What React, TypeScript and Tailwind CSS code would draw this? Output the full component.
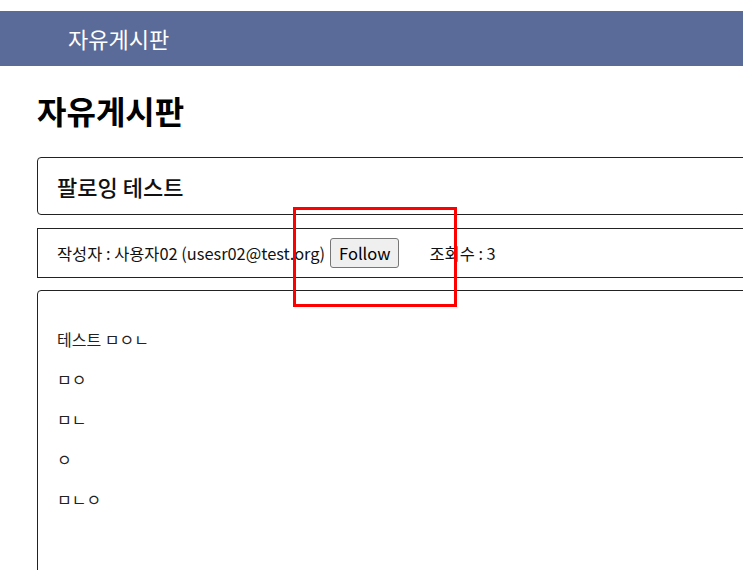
const FONT = "font-['Noto_Sans_CJK_KR','Noto_Sans',sans-serif]";

function Header() {
  return (
    <div className="mt-[11px] flex h-[55px] items-center bg-[#5a6b99] pl-[68px]">
      <span className="text-[22px] text-white">자유게시판</span>
    </div>
  );
}

function PostTitle() {
  return (
    <div className="flex h-[58px] w-[1100px] items-center rounded-[4px] border border-[#222] pl-[19px]">
      <h2 className="text-[22px] font-medium text-[#111]">팔로잉 테스트</h2>
    </div>
  );
}

function PostMeta() {
  return (
    <div className="mt-[13px] flex h-[50px] w-[1100px] items-center border border-[#222] pl-[19px] text-[16.4px] text-[#111]">
      <span>작성자 : 사용자02 (usesr02@test.org)</span>
      <button className="ml-[5px] h-[30px] rounded-[3px] border border-[#767676] bg-[#efefef] px-[8px] text-[16.5px] text-black">
        Follow
      </button>
      <span className="ml-[30px]">조회수 : 3</span>
    </div>
  );
}

function PostBody() {
  const lines = ["테스트 ㅁㅇㄴ", "ㅁㅇ", "ㅁㄴ", "ㅇ", "ㅁㄴㅇ"];
  return (
    <div className="mt-[12px] h-[400px] w-[1100px] rounded-tl-[4px] border border-[#222] px-[19px] pt-[28px]">
      {lines.map((l) => (
        <p key={l} className="flex h-10 items-center text-[16px] text-[#222]">
          {l}
        </p>
      ))}
    </div>
  );
}

export default function App() {
  return (
    <div className={`relative h-[570px] w-full overflow-hidden bg-white ${FONT}`}>
      <Header />
      <div className="pl-[37px]">
        <h1 className="mt-[24px] mb-[27px] text-[32px] leading-[40px] font-bold text-black">자유게시판</h1>
        <PostTitle />
        <PostMeta />
        <PostBody />
      </div>
      <div className="absolute top-[207px] left-[293px] h-[100px] w-[164px] border-[3px] border-[#ff0000]" />
    </div>
  );
}
